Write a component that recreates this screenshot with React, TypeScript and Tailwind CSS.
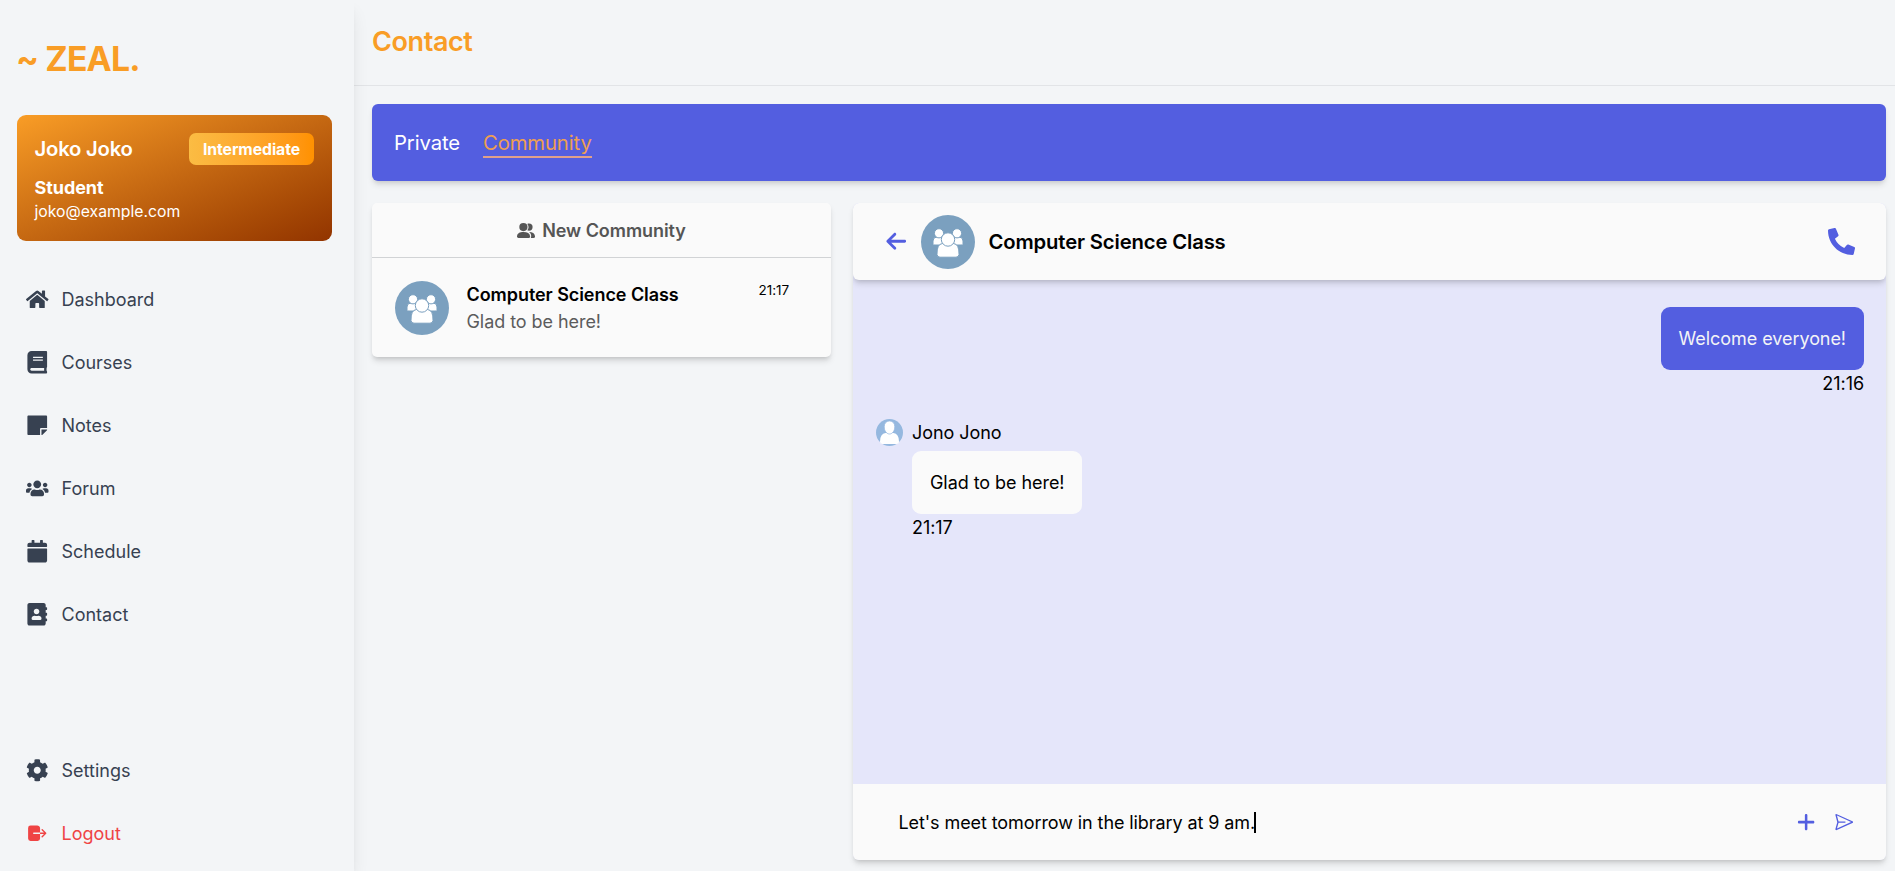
import { FaHome, FaBook, FaStickyNote, FaUsers, FaCalendar, FaAddressBook, FaCog, FaPhoneAlt } from "react-icons/fa";
import { FaArrowLeft, FaPlus } from "react-icons/fa6";
import { IoLogOut } from "react-icons/io5";
import { VscSend } from "react-icons/vsc";

const links = [
  { label: "Dashboard", Icon: FaHome },
  { label: "Courses", Icon: FaBook },
  { label: "Notes", Icon: FaStickyNote },
  { label: "Forum", Icon: FaUsers },
  { label: "Schedule", Icon: FaCalendar },
  { label: "Contact", Icon: FaAddressBook },
];

function NavItem({ label, Icon, danger = false }: { label: string; Icon: typeof FaHome; danger?: boolean }) {
  return (
    <a className={danger ? "flex h-[45px] items-center gap-[13px] px-[9px] text-[#ef4444]" : "flex h-[45px] items-center gap-[13px] px-[9px] text-[#374151]"}>
      <Icon className="size-[22.5px]" />
      <span className="text-[18px] leading-[27px] tracking-normal">{label}</span>
    </a>
  );
}

function PeopleIcon() {
  return (
    <svg viewBox="0 0 18 15" className="h-[15px] w-[18px]" fill="currentColor">
      <circle cx="6.400" cy="4.100" r="4.100" />
      <path d="M0 13.200C.2 10.600 2.600 9.100 6.500 9.100s6.300 1.500 6.600 4.100q.1 1.800-1.400 1.800H1.400Q-.1 15 0 13.200Z" />
      <path d="M10.300.9c.5-.3 1.100-.4 1.700-.4a3.600 3.600 0 0 1 0 7.200c-.6 0-1.200-.1-1.700-.4a5.200 5.200 0 0 0 0-6.400Z" />
      <path d="M12 9.100c3.600 0 5.800 1.500 6 4.200q.1 1.700-1.500 1.700h-2.700c.9-2.400.2-4.500-1.800-5.900Z" />
    </svg>
  );
}

function GroupAvatar() {
  return (
    <svg viewBox="0 0 54 54" className="size-[54px] shrink-0">
      <circle cx="27" cy="27" r="27" fill="#7ba0bf" />
      <g fill="#fff" stroke="#7ba0bf" strokeWidth="1">
        <path d="M12 29.500v-3.500q0-4 4-4h6q3 0 3 4v4h-11q-2 0-2-.5z" />
        <path d="M42 29.500v-3.500q0-4-4-4h-6q-3 0-3 4v4h11q2 0 2-.5z" />
        <circle cx="18" cy="18.300" r="4.600" />
        <circle cx="36" cy="18.300" r="4.600" />
        <path d="M16 39.500q-.3-10.500 5.500-11h11q5.800.5 5.500 11-.3 2.700-3 2.700H19q-2.700 0-3-2.700z" />
        <circle cx="27" cy="24.500" r="6.700" />
      </g>
    </svg>
  );
}

function PersonAvatar() {
  return (
    <svg viewBox="0 0 27 27" className="size-[27px] shrink-0">
      <circle cx="13.5" cy="13.5" r="13.5" fill="#95b8df" />
      <path d="M4 22.500Q4.200 14.500 9.500 14h8q5.300.5 5.500 8.500 0 2.500-2.500 2.500h-14Q4 25 4 22.500Z" fill="#fff" />
      <path d="M13.500 2c3.300 0 5.300 2.300 5.300 5.800 0 3.700-2.200 7.200-5.300 7.200s-5.300-3.500-5.300-7.200C8.200 4.300 10.200 2 13.500 2Z" fill="#fff" stroke="#95b8df" strokeWidth=".8" />
    </svg>
  );
}

export default function App() {
  return (
    <div className="flex h-[871px] w-full overflow-hidden bg-[#f3f5f7] font-['Inter',sans-serif] text-[18px] leading-[27px] tracking-[-0.06px] text-black">
      <aside className="z-10 flex w-[354px] shrink-0 flex-col bg-[#f3f5f7] px-[17px] shadow-[0_11px_17px_-3px_rgba(0,0,0,0.1),0_4px_7px_-4px_rgba(0,0,0,0.1)]">
        <h1 className="mt-[38px] -ml-px h-[41px] text-[33.75px] leading-[41px] font-bold tracking-[-0.8px] text-[#f99d26]">~ ZEAL.</h1>
        <section className="mt-[36px] h-[126px] w-[315px] rounded-[9px] bg-linear-to-br from-[#f99d26] to-[#923400] pt-[18px] pr-[18px] pl-[17.5px] text-white">
          <div className="flex items-center justify-between">
            <h2 className="-mt-px text-[20.25px] font-semibold tracking-[-0.2px]">Joko Joko</h2>
            <span className="flex h-[32px] w-[125px] items-center justify-center rounded-[7px] bg-linear-to-r from-[#fbbc43] to-[#ff9100] text-[15.75px] font-bold">Intermediate</span>
          </div>
          <p className="mt-[9px] font-bold">Student</p>
          <p className="text-[15.75px] leading-[22px] tracking-normal">joko@example.com</p>
        </section>
        <nav className="mt-[36px] flex flex-col gap-[18px]">
          {links.map((l) => <NavItem key={l.label} {...l} />)}
        </nav>
        <nav className="mt-auto mb-[15px] flex flex-col gap-[18px]">
          <NavItem label="Settings" Icon={FaCog} />
          <NavItem label="Logout" Icon={IoLogOut} danger />
        </nav>
      </aside>

      <main className="flex min-w-0 flex-1 flex-col">
        <header className="h-[86px] border-b border-[#e2e4e7] pt-[24px] pl-[18px]">
          <h2 className="text-[27px] leading-[36px] font-semibold tracking-[-0.4px] text-[#f99d26]">Contact</h2>
        </header>
        <div className="flex min-h-0 flex-1 flex-col pt-[18px] pr-[9px] pb-[11px] pl-[18px]">
          <div className="flex h-[77px] shrink-0 items-center gap-[23px] rounded-[6px] bg-[#535ee0] px-[22px] text-[20.25px] tracking-[-0.1px] text-white shadow-[0_4.5px_6.75px_-1px_rgba(0,0,0,0.1),0_2.25px_4.5px_-2px_rgba(0,0,0,0.1)]">
            <span>Private</span>
            <span className="mt-[2px] border-b-2 border-[#dfa08b] text-[#ee9f52]">Community</span>
          </div>
          <div className="mt-[22px] flex min-h-0 flex-1 items-start gap-[22px]">
            <section className="h-[154px] w-[459px] shrink-0 rounded-[5px] bg-[#fafafa] shadow-[0_4.5px_6.75px_-1px_rgba(0,0,0,0.12),0_2.25px_4.5px_-2px_rgba(0,0,0,0.12)]">
              <div className="flex h-[55px] items-center justify-center gap-[7px] border-b border-[#d1d3d5] font-semibold text-[#555]">
                <PeopleIcon />
                <span>New Community</span>
              </div>
              <div className="flex items-start pt-[23px] pr-[42px] pl-[23px]">
                <GroupAvatar />
                <div className="ml-[17.5px] flex-1">
                  <p className="font-semibold">Computer Science Class</p>
                  <p className="text-[#5c5c5c]">Glad to be here!</p>
                </div>
                <span className="text-[13.5px] leading-[18px]">21:17</span>
              </div>
            </section>
            <section className="flex h-full min-w-0 flex-1 flex-col overflow-hidden rounded-[6px] bg-[#e5e6fa] shadow-[0_4.5px_6.75px_-1px_rgba(0,0,0,0.12),0_2.25px_4.5px_-2px_rgba(0,0,0,0.12)]">
              <header className="flex h-[77px] shrink-0 items-center rounded-[6px] bg-[#fafafa] pr-[31px] pl-[32px] shadow-[0_4.5px_6.75px_-1px_rgba(0,0,0,0.12),0_2.25px_4.5px_-2px_rgba(0,0,0,0.12)]">
                <FaArrowLeft className="size-[22.5px] text-[#535ee0]" />
                <div className="ml-[13.5px]"><GroupAvatar /></div>
                <h3 className="ml-[13.5px] flex-1 text-[20.25px] font-semibold tracking-[-0.14px]">Computer Science Class</h3>
                <FaPhoneAlt className="size-[27px] text-[#535ee0]" />
              </header>
              <div className="flex flex-1 flex-col pt-[27px] pr-[22px] pl-[23px]">
                <div className="flex flex-col items-end">
                  <p className="rounded-[9px] bg-[#535ee0] p-[18px] text-[#f3f4f6]">Welcome everyone!</p>
                  <span>21:16</span>
                </div>
                <div className="mt-[22px] flex flex-col">
                  <div className="flex items-center gap-[9px]"><PersonAvatar /><span>Jono Jono</span></div>
                  <div className="mt-[5px] flex flex-col items-start pl-[36px]">
                    <p className="rounded-[9px] bg-[#fafafa] p-[18px]">Glad to be here!</p>
                    <span>21:17</span>
                  </div>
                </div>
              </div>
              <footer className="flex h-[76px] shrink-0 items-center bg-[#fafafa] pr-[32px] pl-[45.5px]">
                <span className="tracking-[-0.09px]">Let&apos;s meet tomorrow in the library at 9 am.</span>
                <span className="-ml-px h-[21px] w-[2px] bg-black" />
                <FaPlus className="mr-[18px] ml-auto size-[20.25px] text-[#535ee0]" />
                <VscSend className="size-[20.25px] text-[#535ee0]" />
              </footer>
            </section>
          </div>
        </div>
      </main>
    </div>
  );
}
